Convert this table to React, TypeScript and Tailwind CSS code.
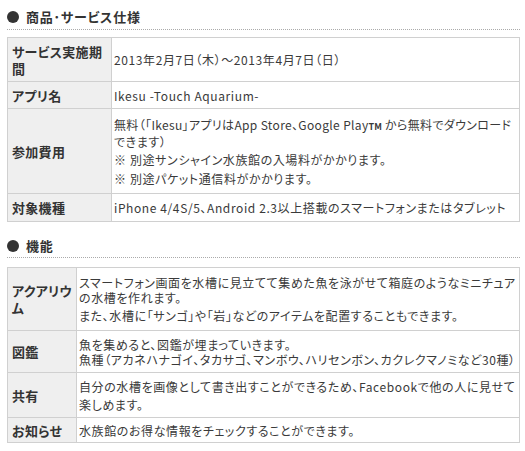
import React from "react";

type Line = { t: React.ReactNode; cls?: string };
type RowDef = { label: string[]; lines: Line[]; h: string };

function Heading({ title, cls }: { title: string; cls: string }) {
  return (
    <div className={`border-b border-dotted border-[#aaaaaa] ${cls}`}>
      <div className="flex h-[16px] items-center">
        <span className="h-[12px] w-[12px] shrink-0 rounded-full bg-[#333333]" />
        <span className="ml-[7px] text-[13px] font-bold leading-[16px] tracking-[0.8px] text-[#333333]">
          {title}
        </span>
      </div>
    </div>
  );
}

function Table({ rows, labelW }: { rows: RowDef[]; labelW: string }) {
  return (
    <div className="border-x border-t border-[#d0d0d0]">
      {rows.map((r, i) => (
        <div key={i} className={`flex border-b border-[#d0d0d0] ${r.h}`}>
          <div
            className={`flex shrink-0 flex-col justify-center border-r border-[#d0d0d0] bg-[#efefef] pl-[4px] text-[13px] font-bold leading-[17px] tracking-[0.3px] text-[#333333] ${labelW}`}
          >
            {r.label.map((l, j) => (
              <div key={j} className="whitespace-nowrap">
                {l}
              </div>
            ))}
          </div>
          <div className="flex min-w-0 flex-1 flex-col justify-center pl-[2px] text-[12px] leading-[15px] tracking-[0.6px] text-[#3a3a3a]">
            {r.lines.map((l, j) => (
              <div key={j} className={`whitespace-nowrap ${l.cls ?? ""}`}>
                {l.t}
              </div>
            ))}
          </div>
        </div>
      ))}
    </div>
  );
}

export default function App() {
  const spec: RowDef[] = [
    {
      label: ["サービス実施期", "間"],
      lines: [{ t: "2013年2月7日（木）～2013年4月7日（日）" }],
      h: "h-[44px]",
    },
    {
      label: ["アプリ名"],
      lines: [{ t: "Ikesu -Touch Aquarium-" }],
      h: "h-[27px]",
    },
    {
      label: ["参加費用"],
      lines: [
        {
          t: (
            <>
              無料（「Ikesu」アプリはApp Store、Google Play
              <span className="text-[9px] font-bold tracking-normal">TM</span> から無料でダウンロード
            </>
          ),
          cls: "tracking-[0.35px]",
        },
        { t: "できます）" },
        { t: "※ 別途サンシャイン水族館の入場料がかかります。", cls: "mt-[3px]" },
        { t: "※ 別途パケット通信料がかかります。", cls: "mt-[4px]" },
      ],
      h: "h-[85px]",
    },
    {
      label: ["対象機種"],
      lines: [{ t: "iPhone 4/4S/5、Android 2.3以上搭載のスマートフォンまたはタブレット" }],
      h: "h-[28px]",
    },
  ];

  const features: RowDef[] = [
    {
      label: ["アクアリウ", "ム"],
      lines: [
        { t: "スマートフォン画面を水槽に見立てて集めた魚を泳がせて箱庭のようなミニチュア" },
        { t: "の水槽を作れます。" },
        { t: "また、水槽に「サンゴ」や「岩」などのアイテムを配置することもできます。", cls: "mt-[3px]" },
      ],
      h: "h-[63px]",
    },
    {
      label: ["図鑑"],
      lines: [
        { t: "魚を集めると、図鑑が埋まっていきます。" },
        { t: "魚種（アカネハナゴイ、タカサゴ、マンボウ、ハリセンボン、カクレクマノミなど30種）" },
      ],
      h: "h-[42px]",
    },
    {
      label: ["共有"],
      lines: [
        { t: "自分の水槽を画像として書き出すことができるため、Facebookで他の人に見せて" },
        { t: "楽しめます。", cls: "mt-[3px]" },
      ],
      h: "h-[45px]",
    },
    {
      label: ["お知らせ"],
      lines: [{ t: "水族館のお得な情報をチェックすることができます。" }],
      h: "h-[25px]",
    },
  ];

  return (
    <div className="h-[451px] w-[525px] overflow-hidden bg-white pl-[7px] pr-[5px] font-['Noto_Sans_CJK_JP',sans-serif] [font-feature-settings:'palt']">
      <Heading title="商品･サービス仕様" cls="pt-[9px] pb-[4px]" />
      <div className="mt-[7px]">
        <Table rows={spec} labelW="w-[104px]" />
      </div>
      <Heading title="機能" cls="pt-[16px] pb-[3px]" />
      <div className="mt-[9px]">
        <Table rows={features} labelW="w-[69px]" />
      </div>
    </div>
  );
}
